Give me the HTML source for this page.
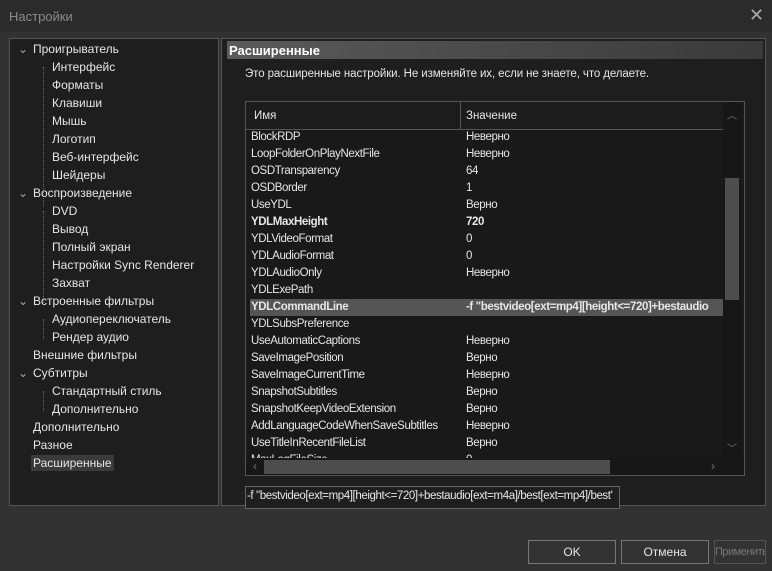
<!DOCTYPE html><html><head><meta charset="utf-8"><style>
*{margin:0;padding:0;box-sizing:border-box}
body{width:772px;height:571px;background:#323232;font-family:"Liberation Sans",sans-serif;font-size:12px;color:#e6e6e6;position:relative;overflow:hidden}
.a{position:absolute}
.title{left:0;top:0;width:772px;height:32px;background:#2b2b2b;color:#8a8a8a;font-size:13px;padding:9px 0 0 9px}
.lp{left:9px;top:38px;width:210px;height:468px;background:#1e1e1e;border:1px solid #555}
.rp{left:221px;top:38px;width:545px;height:468px;background:#1e1e1e;border:1px solid #555}
.t{position:absolute;white-space:nowrap;line-height:14px}
.tbl{left:245px;top:101px;width:500px;height:375px;background:#191919;border:1px solid #555;overflow:hidden}
.row{position:absolute;left:5px;width:466px;height:17px;line-height:17px;white-space:nowrap;font-size:11.5px;letter-spacing:-0.4px}
.row span{position:absolute;left:215px}
.btn{position:absolute;top:540px;height:24px;border:1px solid #777;background:#333;text-align:center;line-height:22px}
</style></head><body>
<div class="a title">Настройки</div>
<div class="a" style="left:749px;top:7px;color:#aaa;font-size:18px;line-height:16px">✕</div>
<div class="a lp">
<div class="a" style="left:33px;top:28px;height:140px;border-left:1px dotted #666"></div>
<div class="a" style="left:33px;top:172px;height:92px;border-left:1px dotted #666"></div>
<div class="a" style="left:33px;top:280px;height:20px;border-left:1px dotted #666"></div>
<div class="a" style="left:33px;top:352px;height:20px;border-left:1px dotted #666"></div>
</div>
<div class="a" style="left:9px;top:38px;width:210px;height:468px">
<div class="t" style="left:9px;top:4px;color:#aaa">⌄</div><div class="t" style="left:24px;top:4px">Проигрыватель</div>
<div class="t" style="left:43px;top:22px">Интерфейс</div>
<div class="t" style="left:43px;top:40px">Форматы</div>
<div class="t" style="left:43px;top:58px">Клавиши</div>
<div class="t" style="left:43px;top:76px">Мышь</div>
<div class="t" style="left:43px;top:94px">Логотип</div>
<div class="t" style="left:43px;top:112px">Веб-интерфейс</div>
<div class="t" style="left:43px;top:130px">Шейдеры</div>
<div class="t" style="left:9px;top:148px;color:#aaa">⌄</div><div class="t" style="left:24px;top:148px">Воспроизведение</div>
<div class="t" style="left:43px;top:166px">DVD</div>
<div class="t" style="left:43px;top:184px">Вывод</div>
<div class="t" style="left:43px;top:202px">Полный экран</div>
<div class="t" style="left:43px;top:220px">Настройки Sync Renderer</div>
<div class="t" style="left:43px;top:238px">Захват</div>
<div class="t" style="left:9px;top:256px;color:#aaa">⌄</div><div class="t" style="left:24px;top:256px">Встроенные фильтры</div>
<div class="t" style="left:43px;top:274px">Аудиопереключатель</div>
<div class="t" style="left:43px;top:292px">Рендер аудио</div>
<div class="t" style="left:24px;top:310px">Внешние фильтры</div>
<div class="t" style="left:9px;top:328px;color:#aaa">⌄</div><div class="t" style="left:24px;top:328px">Субтитры</div>
<div class="t" style="left:43px;top:346px">Стандартный стиль</div>
<div class="t" style="left:43px;top:364px">Дополнительно</div>
<div class="t" style="left:24px;top:382px">Дополнительно</div>
<div class="t" style="left:24px;top:400px">Разное</div>
<div class="t" style="left:22px;top:417px;background:#3a3a3a;padding:1px 2px">Расширенные</div>
</div>
<div class="a rp"></div>
<div class="a" style="left:227px;top:41px;width:536px;height:18px;background:linear-gradient(90deg,#5a5a5a,#3a3a3a);font-weight:bold;font-size:13px;color:#fff;padding:2px 0 0 2px">Расширенные</div>
<div class="a" style="left:245px;top:68px;font-size:11.5px;letter-spacing:-0.1px">Это расширенные настройки. Не изменяйте их, если не знаете, что делаете.</div>
<div class="a tbl">
<div class="a" style="left:0;top:0;width:477px;height:28px;border-bottom:1px solid #555;background:#1c1c1c"></div>
<div class="a" style="left:214px;top:0;height:28px;border-left:1px solid #555"></div>
<div class="a" style="left:8px;top:8px;font-size:11.5px">Имя</div>
<div class="a" style="left:220px;top:8px;font-size:11.5px">Значение</div>
<div class="a" style="left:477px;top:0;width:18px;height:356px;background:#171717"></div>
<div class="a" style="left:481px;top:5px;color:#777;font-size:10px">︿</div>
<div class="a" style="left:479px;top:76px;width:14px;height:122px;background:#4d4d4d"></div>
<div class="a" style="left:481px;top:338px;color:#777;font-size:10px">﹀</div>
<div class="row" style="top:27px">BlockRDP<span>Неверно</span></div>
<div class="row" style="top:44px">LoopFolderOnPlayNextFile<span>Неверно</span></div>
<div class="row" style="top:61px">OSDTransparency<span>64</span></div>
<div class="row" style="top:78px">OSDBorder<span>1</span></div>
<div class="row" style="top:95px">UseYDL<span>Верно</span></div>
<div class="row" style="top:112px;font-weight:bold">YDLMaxHeight<span>720</span></div>
<div class="row" style="top:129px">YDLVideoFormat<span>0</span></div>
<div class="row" style="top:146px">YDLAudioFormat<span>0</span></div>
<div class="row" style="top:163px">YDLAudioOnly<span>Неверно</span></div>
<div class="row" style="top:180px">YDLExePath<span></span></div>
<div class="row" style="top:197px;font-weight:bold;background:#555;left:4px;width:473px;padding-left:1px">YDLCommandLine<span style="left:216px">-f "bestvideo[ext=mp4][height&lt;=720]+bestaudio</span></div>
<div class="row" style="top:214px">YDLSubsPreference<span></span></div>
<div class="row" style="top:231px">UseAutomaticCaptions<span>Неверно</span></div>
<div class="row" style="top:248px">SaveImagePosition<span>Верно</span></div>
<div class="row" style="top:265px">SaveImageCurrentTime<span>Неверно</span></div>
<div class="row" style="top:282px">SnapshotSubtitles<span>Верно</span></div>
<div class="row" style="top:299px">SnapshotKeepVideoExtension<span>Верно</span></div>
<div class="row" style="top:316px">AddLanguageCodeWhenSaveSubtitles<span>Неверно</span></div>
<div class="row" style="top:333px">UseTitleInRecentFileList<span>Верно</span></div>
<div class="row" style="top:350px">MaxLogFileSize<span>0</span></div>
<div class="a" style="left:0;top:356px;width:498px;height:18px;background:#171717"></div>
<div class="a" style="left:18px;top:358px;width:346px;height:14px;background:#4d4d4d"></div>
<div class="a" style="left:7px;top:357px;color:#777">‹</div>
<div class="a" style="left:465px;top:357px;color:#777">›</div>
</div>
<div class="a" style="left:245px;top:486px;width:375px;height:23px;border:1px solid #666;background:#1e1e1e;font-size:11.5px;letter-spacing:-0.4px;padding:3px 0 0 1px;white-space:nowrap;overflow:hidden">-f "bestvideo[ext=mp4][height&lt;=720]+bestaudio[ext=m4a]/best[ext=mp4]/best'</div>
<div class="btn" style="left:528px;width:88px">OK</div>
<div class="btn" style="left:621px;width:88px">Отмена</div>
<div class="btn" style="left:714px;width:52px;color:#777;border-color:#555;overflow:hidden;white-space:nowrap;font-size:11px;letter-spacing:-0.5px">Применить</div>
</body></html>
